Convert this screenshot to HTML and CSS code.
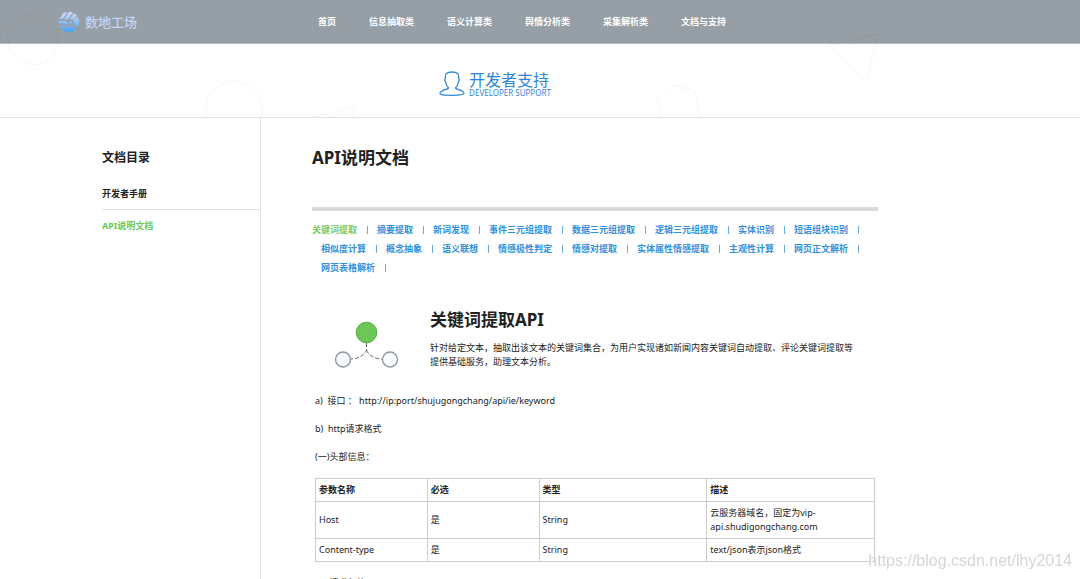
FILE: index.html
```html
<!DOCTYPE html>
<html lang="zh-CN">
<head>
    <meta charset="UTF-8">
    <meta name="viewport" content="width=device-width, initial-scale=1.0">
    <title>数地工场 - API说明文档</title>
    <link rel="stylesheet" href="styles.css">
</head>
<body>
    <header class="navbar">
        <a class="logo" href="#">
            <svg class="logo-icon" viewBox="0 0 22 22">
                <defs>
                    <linearGradient id="logoFill" gradientUnits="userSpaceOnUse" x1="0" y1="2" x2="0" y2="20">
                        <stop offset="0" stop-color="#ccd6fa"/>
                        <stop offset="1" stop-color="#4da6f5"/>
                    </linearGradient>
                </defs>
                <g fill="url(#logoFill)">
                    <path d="M5.500 2L9.500 1L5 8H1.200Z"/>
                    <path d="M11 1H15L9.800 8.500H6Z"/>
                    <path d="M16 2L19 4.500L16 8L11.500 8.500Z"/>
                    <path d="M.5 10H8L11 12.500L9 14.500L6.500 12.500H1Z"/>
                    <path d="M19.500 5.500L21.500 11L20 16L16 13L15 9.500Z"/>
                    <path d="M1.500 14.500H5.500L9 17L13.500 14L18.500 17.500L14.500 20.800L9 21.500L4.500 19Z"/>
                    <circle cx="13" cy="11.500" r="1.200"/>
                </g>
            </svg>
            <span>数地工场</span>
        </a>
        <nav class="nav-menu">
            <a href="#">首页</a>
            <a href="#">信息抽取类</a>
            <a href="#">语义计算类</a>
            <a href="#">舆情分析类</a>
            <a href="#">采集解析类</a>
            <a href="#">文档与支持</a>
        </nav>
    </header>

    <section class="banner">
        <svg class="banner-shapes" width="1080" height="117" viewBox="0 0 1080 117">
            <g fill="none" stroke="#000000" stroke-opacity="0.04">
                <circle cx="33" cy="39" r="25.500"/>
                <circle cx="234" cy="109" r="28"/>
                <path d="M312 118L354 107L352 118"/>
                <path d="M662 118L657 100L673 85L695 91L700 117"/>
                <path d="M830 45L879 34L866 81Z"/>
            </g>
        </svg>
        <div class="banner-title">
            <svg class="user-icon" viewBox="0 0 26 26">
                <path d="M9.500 17C7.500 15 6.800 13 6.500 10.500C5.300 10 5.600 8 6.400 7.500C5.500 3 8 1 13 1C18 1 20.500 3 19.600 7.500C20.400 8 20.600 10 19.500 10.500C19.200 13 18.500 15 16.500 17C17 19 24.500 18.500 25 22.500C25 24 21 24.300 13 24.300C5 24.300 1 24 1 22.500C1.500 18.500 9 19 9.500 17Z"/>
            </svg>
            <div>
                <div class="banner-cn">开发者支持</div>
                <div class="banner-en">DEVELOPER SUPPORT</div>
            </div>
        </div>
    </section>

    <div class="layout">
        <aside class="sidebar">
            <h2>文档目录</h2>
            <a class="side-link" href="#">开发者手册</a>
            <a class="side-link active" href="#">API说明文档</a>
        </aside>

        <main class="content">
            <h1>API说明文档</h1>
            <ul class="api-links">
                <li><a class="active" href="#">关键词提取</a></li>
                <li><a href="#">摘要提取</a></li>
                <li><a href="#">新词发现</a></li>
                <li><a href="#">事件三元组提取</a></li>
                <li><a href="#">数据三元组提取</a></li>
                <li><a href="#">逻辑三元组提取</a></li>
                <li><a href="#">实体识别</a></li>
                <li><a href="#">短语组块识别</a></li>
                <li><a href="#">相似度计算</a></li>
                <li><a href="#">概念抽象</a></li>
                <li><a href="#">语义联想</a></li>
                <li><a href="#">情感极性判定</a></li>
                <li><a href="#">情感对提取</a></li>
                <li><a href="#">实体属性情感提取</a></li>
                <li><a href="#">主观性计算</a></li>
                <li><a href="#">网页正文解析</a></li>
                <li><a href="#">网页表格解析</a></li>
            </ul>

            <section class="api-intro">
                <svg class="api-icon" width="66" height="50" viewBox="0 0 66 50">
                    <circle cx="32.500" cy="11.500" r="10.300" fill="#6cc755" stroke="#57a844"/>
                    <path d="M32.500 22V29C31 34 24 38 17 38M32.500 29C34 34 41 38 48 38" fill="none" stroke="#666666" stroke-dasharray="4 2"/>
                    <circle cx="9" cy="38.500" r="7.500" fill="#f7fbff" stroke="#8b969e" stroke-width="1.300"/>
                    <circle cx="56" cy="38.500" r="7.500" fill="#f7fbff" stroke="#8b969e" stroke-width="1.300"/>
                </svg>
                <div>
                    <h2>关键词提取API</h2>
                    <p>针对给定文本，抽取出该文本的关键词集合，为用户实现诸如新闻内容关键词自动提取、评论关键词提取等<br>提供基础服务，助理文本分析。</p>
                </div>
            </section>

            <section class="api-doc">
                <p>a)&nbsp; 接口 ： http://ip:port/shujugongchang/api/ie/keyword</p>
                <p>b)&nbsp; http请求格式</p>
                <p>(一)头部信息：</p>
                <table class="param-table">
                    <thead>
                        <tr>
                            <th class="col-small">参数名称</th>
                            <th class="col-small">必选</th>
                            <th>类型</th>
                            <th>描述</th>
                        </tr>
                    </thead>
                    <tbody>
                        <tr>
                            <td>Host</td>
                            <td>是</td>
                            <td>String</td>
                            <td>云服务器域名，固定为vip-<br>api.shudigongchang.com</td>
                        </tr>
                        <tr>
                            <td>Content-type</td>
                            <td>是</td>
                            <td>String</td>
                            <td>text/json表示json格式</td>
                        </tr>
                    </tbody>
                </table>
                <p>(二)请求包体</p>
            </section>
        </main>
    </div>

    <div class="watermark">https://blog.csdn.net/lhy2014</div>
</body>
</html>
```

FILE: styles.css
```css
* {
    box-sizing: border-box;
}
body {
    font-family: "Noto Sans", "Noto Sans CJK SC", sans-serif;
    font-size: 9px;
    line-height: 14px;
    margin: 0;
    color: #222222;
    background-color: #ffffff;
}
h1, h2, p, ul {
    margin: 0;
    padding: 0;
}
a {
    text-decoration: none;
}
.navbar {
    display: flex;
    align-items: center;
    height: 44px;
    padding-left: 58px;
    background-color: #979fa6;
    border-bottom: 1px solid #b4babf;
}
.logo {
    display: flex;
    align-items: center;
    gap: 5px;
    width: 260px;
    color: #c3d3f7;
    font-size: 13px;
    font-weight: 500;
}
.logo-icon {
    width: 22px;
    height: 22px;
}
.nav-menu {
    display: flex;
    gap: 33px;
}
.nav-menu a {
    color: #ffffff;
    font-weight: bold;
    white-space: nowrap;
}
.banner {
    display: flex;
    justify-content: center;
    height: 74px;
    padding-top: 27px;
    padding-right: 90px;
    border-bottom: 1px solid #e2e2e2;
}
.banner-shapes {
    position: absolute;
    top: 0;
    left: 0;
}
.banner-title {
    display: flex;
    gap: 4px;
    color: #2f86d6;
}
.user-icon {
    width: 26px;
    height: 26px;
    fill: none;
    stroke: #2f86d6;
    stroke-width: 1.3;
}
.banner-cn {
    font-size: 16px;
    line-height: 18px;
}
.banner-en {
    font-size: 8px;
    line-height: 8px;
}
.layout {
    display: flex;
}
.sidebar {
    width: 261px;
    flex-shrink: 0;
    padding-top: 32px;
    padding-left: 102px;
    border-right: 1px solid #e2e2e2;
}
.sidebar h2 {
    margin-bottom: 12px;
    font-size: 12px;
    line-height: 16px;
}
.side-link {
    display: block;
    line-height: 31px;
    color: #222222;
    font-weight: bold;
    border-bottom: 1px solid #e2e2e2;
}
.side-link.active {
    color: #6cc755;
    border-bottom: none;
}
.content {
    flex: 1;
    max-width: 617px;
    padding-top: 28px;
    padding-left: 51px;
}
.content h1 {
    padding-bottom: 37px;
    font-size: 17px;
    line-height: 24px;
    border-bottom: 4px solid #d9d9d9;
}
.api-links {
    display: flex;
    flex-wrap: wrap;
    margin-top: 9px;
    list-style: none;
}
.api-links li {
    display: flex;
    align-items: center;
    height: 19px;
    padding-left: 9px;
}
.api-links li:first-child {
    padding-left: 0;
}
.api-links li::after {
    content: "";
    width: 1px;
    height: 8px;
    margin-left: 10px;
    background-color: #6eabdf;
}
.api-links a {
    color: #3390dc;
    font-weight: bold;
}
.api-links .active {
    color: #7bcb66;
}
.api-intro {
    display: flex;
    gap: 30px;
    margin-top: 31px;
    padding-left: 22px;
}
.api-icon {
    flex-shrink: 0;
    margin-top: 13px;
}
.api-intro h2 {
    margin-bottom: 9px;
    font-size: 17px;
    line-height: 24px;
}
.api-doc {
    margin-top: 23px;
    padding: 0 3px;
}
.api-doc p {
    margin-bottom: 14px;
}
.param-table {
    width: 100%;
    margin-bottom: 14px;
    border-collapse: collapse;
    table-layout: fixed;
}
.param-table th,
.param-table td {
    padding: 4px 3px;
    text-align: left;
    border: 1px solid #cccccc;
}
.col-small {
    width: 20%;
}
.watermark {
    position: fixed;
    right: 8px;
    bottom: 8px;
    color: #d6d6d6;
    font-family: "Liberation Sans", sans-serif;
    font-size: 16px;
    line-height: 20px;
    text-shadow: 1px 1px 0 #ffffff;
}
```
